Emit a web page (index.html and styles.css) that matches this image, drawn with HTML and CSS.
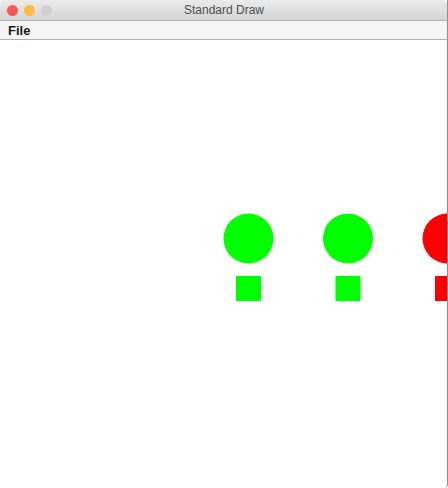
FILE: index.html
```html
<!DOCTYPE html>
<html>
<head>
<meta charset="utf-8">
<title>Standard Draw</title>
<link rel="stylesheet" href="styles.css">
</head>
<body>
<div class="window">
  <div class="titlebar">
    <div class="lights">
      <span class="light red"></span>
      <span class="light yellow"></span>
      <span class="light gray"></span>
    </div>
    <div class="title">Standard Draw</div>
  </div>
  <div class="menubar"><span class="menu">File</span></div>
  <svg class="canvas" width="447" height="448" viewBox="0 0 447 448">
    <circle cx="248.5" cy="198.5" r="25" fill="#00ff00"/>
    <rect x="236" y="236" width="25" height="25" fill="#00ff00"/>
    <circle cx="348" cy="198.5" r="25" fill="#00ff00"/>
    <rect x="335.5" y="236" width="25" height="25" fill="#00ff00"/>
    <circle cx="447.5" cy="198.5" r="25" fill="#ff0000"/>
    <rect x="435" y="236" width="25" height="25" fill="#ff0000"/>
  </svg>
</div>
</body>
</html>
```
FILE: styles.css
```css
html, body {
  margin: 0;
  padding: 0;
  background: #ffffff;
}
.window {
  width: 447px;
  height: 488px;
  border-right: 1px solid #8a8f98;
  border-bottom-left-radius: 4px;
  border-bottom-right-radius: 4px;
  overflow: hidden;
  background: #ffffff;
  font-family: "Liberation Sans", Arial, sans-serif;
  display: flex;
  flex-direction: column;
}
.titlebar {
  height: 20px;
  background: linear-gradient(#ebebeb, #d5d5d5);
  border-bottom: 1px solid #b4b4b4;
  display: flex;
  align-items: center;
  position: relative;
  border-top-left-radius: 5px;
  border-top-right-radius: 5px;
}
.lights {
  display: flex;
  gap: 6px;
  padding-left: 7px;
}
.light {
  width: 11px;
  height: 11px;
  border-radius: 50%;
  display: block;
}
.red { background: #fc5753; }
.yellow { background: #fdbc40; }
.gray { background: #d0d0d0; }
.title {
  position: absolute;
  left: 0;
  right: 0;
  top: 0;
  height: 20px;
  line-height: 21px;
  text-align: center;
  font-size: 12px;
  color: #4d4d4d;
  padding-left: 1px;
}
.menubar {
  height: 18px;
  background: #f6f6f6;
  border-bottom: 1px solid #b0b0b0;
  display: flex;
  align-items: center;
  padding-left: 8px;
}
.menu {
  font-size: 13px;
  font-weight: bold;
  color: #1a1a1a;
}
.canvas {
  display: block;
}
```
